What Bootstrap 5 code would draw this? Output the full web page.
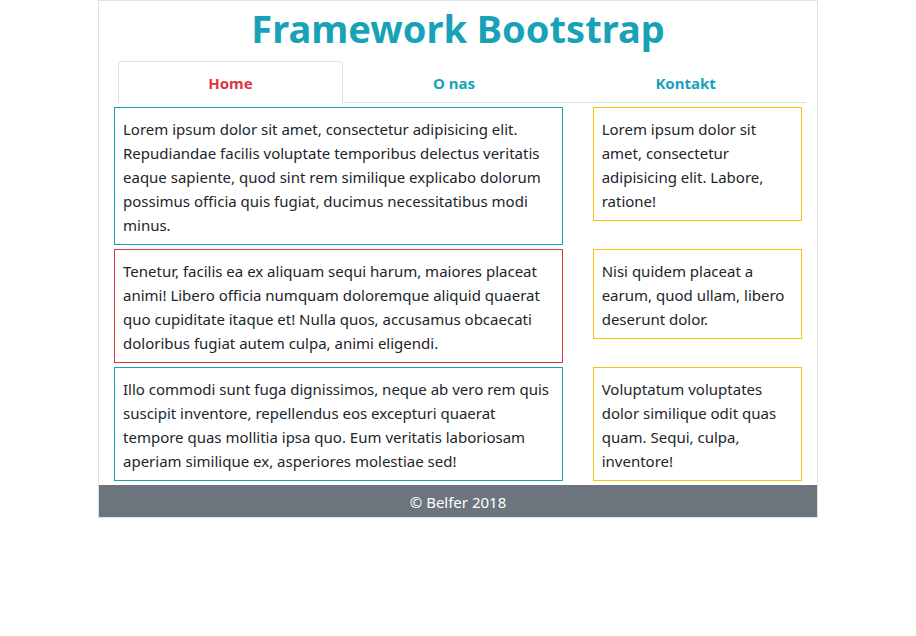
<!DOCTYPE html>
<html lang="pl">
<head>
<meta charset="utf-8">
<meta name="viewport" content="width=device-width, initial-scale=1">
<title>Framework Bootstrap</title>
<link rel="stylesheet" href="https://cdn.jsdelivr.net/npm/bootstrap@5.3.0/dist/css/bootstrap.min.css">
<style>
  :root { --teal: #17a2b8; --red: #dc3545; --amber: #ffc107; --slate: #6c757d; }
  body { font-family: "Noto Sans", "Open Sans", sans-serif; font-size: 15px; line-height: 24px; color: #212529; }
  .site, .site .row { --bs-gutter-x: 30px; }
  .site-title { font-size: 38px; line-height: 46px; color: var(--teal); margin-bottom: 10px; }
  .site-nav { margin-left: 4px; margin-right: -4px; }
  .site-nav .nav-link { color: var(--teal); border-radius: 4px 4px 0 0; padding: 9px 16px 7px; }
  .site-nav .nav-link.active { color: var(--red); }
  .panel { padding: 9px 8px 7px; }
  .edge-teal { border-color: var(--teal) !important; }
  .edge-red { border-color: var(--red) !important; }
  .edge-amber { border-color: var(--amber) !important; }
  .site-footer { background: var(--slate); padding-top: 5px; padding-bottom: 3px; }
</style>
<script defer src="https://cdn.jsdelivr.net/npm/bootstrap@5.3.0/dist/js/bootstrap.bundle.min.js"></script>
</head>
<body>
<div class="container site border">
  <header>
    <h1 class="site-title text-center fw-bold pt-1">Framework Bootstrap</h1>
    <nav class="site-nav nav nav-tabs nav-fill fw-bold mb-1">
      <a class="nav-item nav-link active" aria-current="page" href="#home">Home</a>
      <a class="nav-item nav-link" href="#onas">O nas</a>
      <a class="nav-item nav-link" href="#kontakt">Kontakt</a>
    </nav>
  </header>
  <main>
    <div class="row">
      <div class="col-8"><article class="panel border edge-teal mb-1">Lorem ipsum dolor sit amet, consectetur adipisicing elit. Repudiandae facilis voluptate temporibus delectus veritatis eaque sapiente, quod sint rem similique explicabo dolorum possimus officia quis fugiat, ducimus necessitatibus modi minus.</article></div>
      <div class="col-4"><aside class="panel border edge-amber mb-1">Lorem ipsum dolor sit amet, consectetur adipisicing elit. Labore, ratione!</aside></div>
    </div>
    <div class="row">
      <div class="col-8"><article class="panel border edge-red mb-1">Tenetur, facilis ea ex aliquam sequi harum, maiores placeat animi! Libero officia numquam doloremque aliquid quaerat quo cupiditate itaque et! Nulla quos, accusamus obcaecati doloribus fugiat autem culpa, animi eligendi.</article></div>
      <div class="col-4"><aside class="panel border edge-amber mb-1">Nisi quidem placeat a earum, quod ullam, libero deserunt dolor.</aside></div>
    </div>
    <div class="row">
      <div class="col-8"><article class="panel border edge-teal mb-1">Illo commodi sunt fuga dignissimos, neque ab vero rem quis suscipit inventore, repellendus eos excepturi quaerat tempore quas mollitia ipsa quo. Eum veritatis laboriosam aperiam similique ex, asperiores molestiae sed!</article></div>
      <div class="col-4"><aside class="panel border edge-amber mb-1">Voluptatum voluptates dolor similique odit quas quam. Sequi, culpa, inventore!</aside></div>
    </div>
  </main>
  <div class="row">
    <footer class="site-footer col-12 text-center text-white">© Belfer 2018</footer>
  </div>
</div>
</body>
</html>
